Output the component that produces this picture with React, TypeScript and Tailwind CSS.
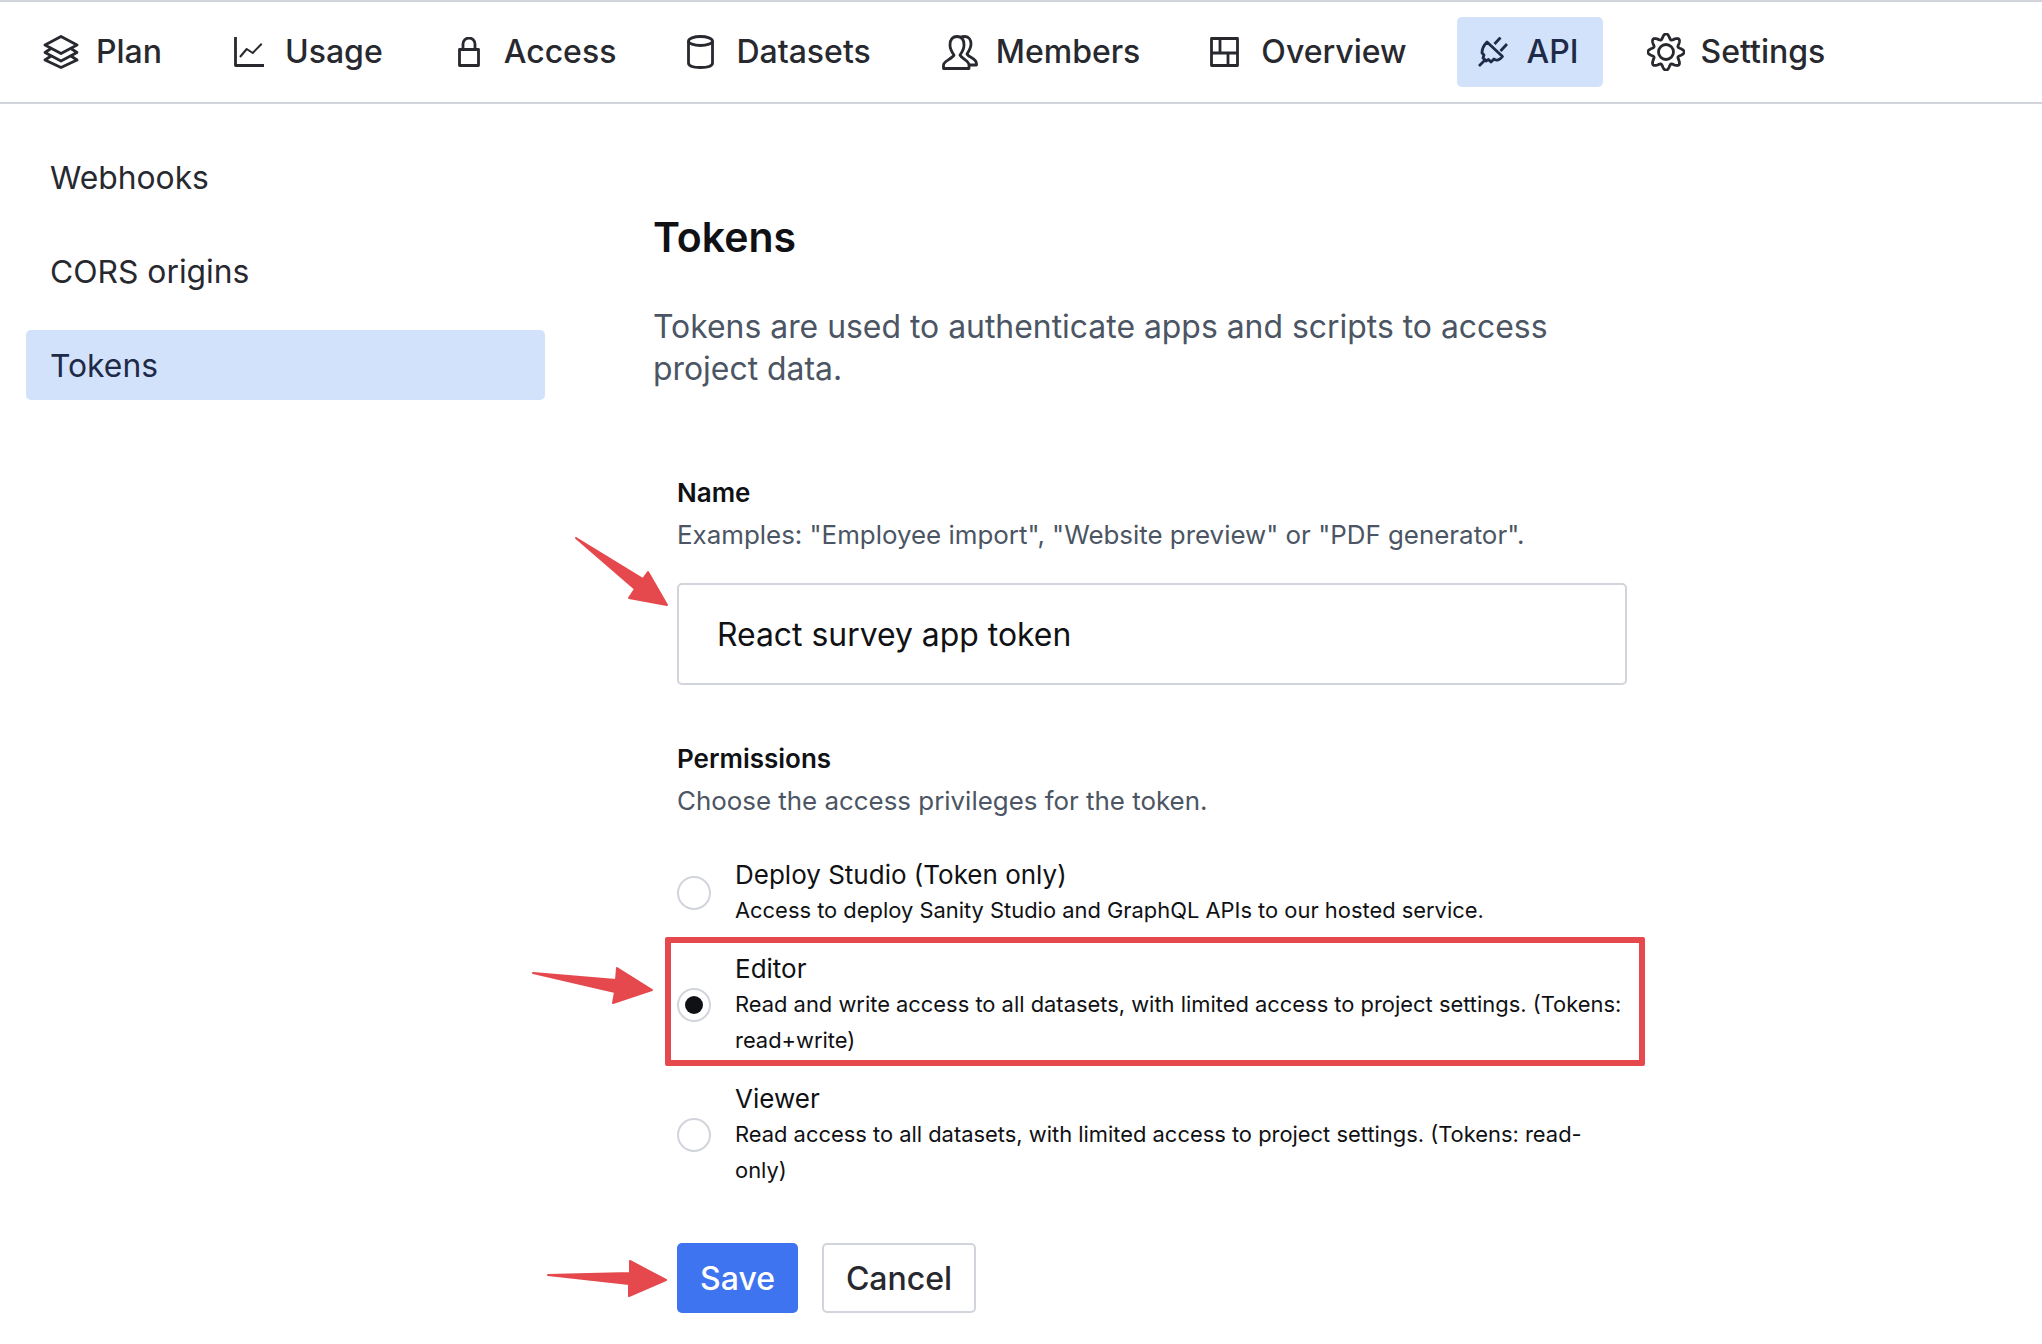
import type { ReactNode } from "react";

const gearPath = (() => {
  const pts: string[] = [];
  for (let i = 0; i < 240; i++) {
    const a = (i / 240) * Math.PI * 2;
    const r = 15.6 + 2.6 * Math.cos(8 * a);
    pts.push(`${(19 + r * Math.sin(a)).toFixed(2)} ${(19 - r * Math.cos(a)).toFixed(2)}`);
  }
  return `M${pts.join("L")}Z`;
})();

function Icon({ w, h, children }: { w: number; h: number; children: ReactNode }) {
  return (
    <svg
      width={w}
      height={h}
      viewBox={`0 0 ${w} ${h}`}
      fill="none"
      stroke="currentColor"
      strokeWidth="2.8"
      strokeLinejoin="round"
      className="shrink-0"
    >
      {children}
    </svg>
  );
}

const navItems = [
  {
    label: "Plan",
    cls: "ml-[43px] gap-[17px]",
    icon: (
      <Icon w={36} h={34}>
        <path d="M18 1.5L34 10L18 18.5L2 10Z" />
        <path d="M8 13.5L2 17.5L18 26L34 17.5L28 13.5" />
        <path d="M8 21L2 25L18 32.5L34 25L28 21" />
      </Icon>
    ),
  },
  {
    label: "Usage",
    cls: "ml-[72px] gap-[21px]",
    icon: (
      <Icon w={30} h={30}>
        <path d="M1.5 0V28.5H30" />
        <path d="M6 20L12.7 12L18.7 16L27.7 6.7" strokeWidth="2" />
      </Icon>
    ),
  },
  {
    label: "Access",
    cls: "ml-[75px] gap-[24px]",
    icon: (
      <Icon w={22} h={30}>
        <rect x="1.5" y="12.5" width="19" height="16" />
        <path d="M5 12V7a6 6 0 0 1 12 0V12" />
      </Icon>
    ),
  },
  {
    label: "Datasets",
    cls: "ml-[71px] gap-[22px]",
    icon: (
      <Icon w={27} h={34}>
        <ellipse cx="13.5" cy="6" rx="12" ry="4.5" />
        <path d="M1.5 6V28c0 3 5 4.5 12 4.5s12-1.5 12-4.5V6" />
      </Icon>
    ),
  },
  {
    label: "Members",
    cls: "ml-[71px] gap-[18px]",
    icon: (
      <Icon w={36} h={35}>
        <path d="M1.5 33.5V30C1.500 26 10 24 12 20C9 16 8 13 8 10C8 4 11 1.500 15 1.500C19 1.500 22 4 22 10C22 13 21 16 18 20C20 24 27 26 27 30V33.500Z" />
        <path d="M19 2.500C20 1.500 22 1.500 23 1.500C27 1.500 29 5 29 9C29 13 27 16 25 19C27 23 34.500 23 34.500 29V30H27" />
      </Icon>
    ),
  },
  {
    label: "Overview",
    cls: "ml-[70px] gap-[22px]",
    icon: (
      <Icon w={29} h={30}>
        <rect x="1.5" y="1.5" width="26" height="27" />
        <path d="M10 1.500V16M1.500 16H27.500M18 16V28.500" />
      </Icon>
    ),
  },
];

const roles = [
  {
    name: "Deploy Studio (Token only)",
    desc: "Access to deploy Sanity Studio and GraphQL APIs to our hosted service.",
    checked: false,
  },
  {
    name: "Editor",
    desc: "Read and write access to all datasets, with limited access to project settings. (Tokens: read+write)",
    checked: true,
  },
  {
    name: "Viewer",
    desc: "Read access to all datasets, with limited access to project settings. (Tokens: read-only)",
    checked: false,
  },
];

export default function App() {
  return (
    <div className="relative w-[2042px] h-[1344px] overflow-hidden bg-white font-['Inter',sans-serif] text-[#27292f]">
      {/* Barra superior */}
      <nav className="h-[104px] flex items-center border-t-2 border-b-2 border-[#d1d5db]">
        {navItems.map((item) => (
          <a key={item.label} className={`${item.cls} h-[70px] flex items-center text-[32px] font-medium`}>
            {item.icon}
            <span>{item.label}</span>
          </a>
        ))}
        <a className="ml-[50px] h-[70px] w-[146px] pl-[21px] flex items-center gap-[19px] rounded-[5px] bg-[#d3e2fb] text-[32px] font-medium text-[#1e2a47]">
          <Icon w={30} h={30}>
            <path d="M9 5L24.5 19.500C22 23 18 24 16 22L13 25L10.500 22.500L8 24L5 21L6 18L4 16C4 12 6 8 9 5Z" />
            <path d="M8 22L1 29M16.500 7L22.500 .5M22.500 14L29 7" />
          </Icon>
          <span>API</span>
        </a>
        <a className="ml-[44px] h-[70px] flex items-center gap-[16px] text-[32px] font-medium">
          <Icon w={38} h={38}>
            <path d={gearPath} />
            <circle cx="19" cy="19" r="7.500" />
          </Icon>
          <span>Settings</span>
        </a>
      </nav>

      <div className="flex">
        {/* Menú lateral */}
        <aside className="w-[653px] pl-[26px] pr-[108px] pt-[38px] flex flex-col gap-[24px] text-[31.8px]">
          <a className="h-[70px] flex items-center pl-[24px] pt-[2px] rounded-[5px]">Webhooks</a>
          <a className="h-[70px] flex items-center pl-[24px] pt-[2px] rounded-[5px]">CORS origins</a>
          <a className="h-[70px] flex items-center pl-[24px] pt-[2px] rounded-[5px] bg-[#d3e2fb] text-[#1e2a47]">Tokens</a>
        </aside>

        <main className="w-[1000px]">
          <h2 className="mt-[108px] text-[41px] leading-[50px] font-semibold text-[#101114]">Tokens</h2>
          <p className="mt-[44px] text-[31.9px] leading-[42px] text-[#4b5563]">
            Tokens are used to authenticate apps and scripts to access project data.
          </p>

          <form className="ml-[24px] w-[950px]">
            <h3 className="mt-[87px] text-[26px] leading-[32px] font-semibold text-[#101114]">Name</h3>
            <p className="mt-[8px] text-[25.9px] leading-[36px] text-[#4b5563]">
              Examples: "Employee import", "Website preview" or "PDF generator".
            </p>
            <input
              readOnly
              value="React survey app token"
              className="mt-[30px] block w-full h-[102px] pl-[38px] border-2 border-[#d1d5db] rounded-[5px] text-[31.9px] text-[#101114] outline-none"
            />

            <h3 className="mt-[58px] text-[26px] leading-[32px] font-semibold text-[#101114]">Permissions</h3>
            <p className="mt-[8px] text-[25.9px] leading-[36px] text-[#4b5563]">Choose the access privileges for the token.</p>

            <div className="mt-[38px] flex flex-col gap-[23px]">
              {roles.map((role) => (
                <label key={role.name} className="flex items-center gap-[24px]">
                  <span className="w-[34px] h-[34px] shrink-0 rounded-full border-2 border-[#d1d5db] bg-white flex items-center justify-center">
                    {role.checked && <span className="w-[18px] h-[18px] rounded-full bg-[#101114]" />}
                  </span>
                  <span className="text-[#101114]">
                    <span className="block text-[26px] leading-[36px]">{role.name}</span>
                    <span className="block -mt-px text-[21.9px] leading-[36px]">{role.desc}</span>
                  </span>
                </label>
              ))}
            </div>

            <div className="mt-[55px] flex gap-[24px] text-[32px] font-medium">
              <button type="button" className="w-[121px] h-[70px] pt-px rounded-[5px] bg-[#3f74f1] text-white">
                Save
              </button>
              <button type="button" className="w-[154px] h-[70px] pt-px rounded-[5px] border-2 border-[#d1d5db] bg-white">
                Cancel
              </button>
            </div>
          </form>
        </main>
      </div>

      {/* Anotaciones de la captura */}
      <div className="absolute left-[665px] top-[937px] w-[980px] h-[129px] border-[6px] border-[#e5484d] rounded-[2px]" />
      <svg width="2042" height="1344" className="absolute left-0 top-0 pointer-events-none" fill="#e5484d" stroke="#e5484d" strokeWidth="2" strokeLinejoin="round">
        <path d="M576 538L643 579L648 572L667 605L629 598L635 589Z" />
        <path d="M533 973L616 980L617 968L652 990L613 1003L615 992Z" />
        <path d="M548 1275L630 1273L630 1261L666 1280L629 1296L629 1284Z" />
      </svg>
    </div>
  );
}
